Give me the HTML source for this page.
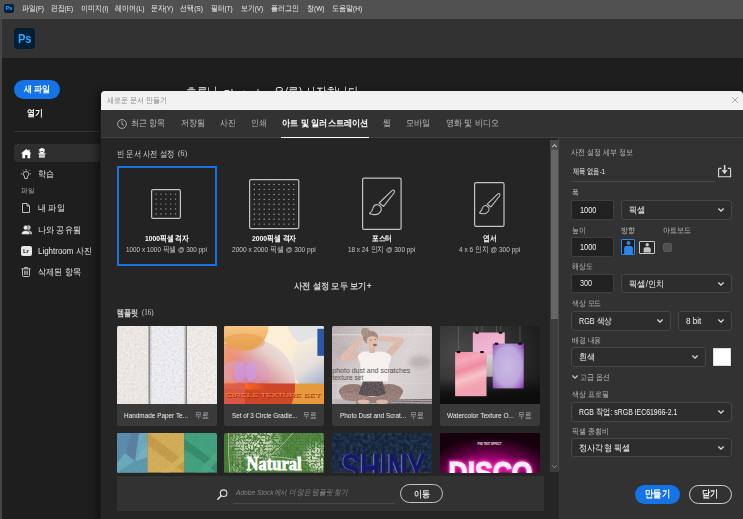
<!DOCTYPE html>
<html lang="ko"><head><meta charset="utf-8"><title>Photoshop</title>
<style>
html,body{margin:0;padding:0}
body{width:743px;height:519px;overflow:hidden;background:#1e1e1e;position:relative;font-family:"Liberation Sans",sans-serif;color:#fff;font-size:9px}
.a{position:absolute}
.t{position:absolute;white-space:nowrap;line-height:12px;height:12px;margin-top:-6px;transform-origin:0 50%}
.b{font-weight:bold}
svg{position:absolute;overflow:visible}
/* menu */
#menubar{left:0;top:0;width:743px;height:19px;background:#515151}
#menubar .t{font-size:7.5px;color:#f0f0f0;top:8.800px}
#header{left:0;top:19px;width:743px;height:39px;background:#323232}
#lstrip{left:0;top:19px;width:1.500px;height:500px;background:#464646}
.side .t{font-size:9px;color:#e8e8e8;left:38.200px}
/* dialog */
#dlg{left:101px;top:91px;width:642px;height:428px;background:#252525;border-radius:4px 4px 0 0;overflow:hidden;box-shadow:-3px 2px 8px rgba(0,0,0,.55)}
#dlg .in{position:absolute;left:-101px;top:-91px;width:743px;height:519px}
#titlebar{left:101px;top:91px;width:642px;height:18.500px;background:#f2f2f2}
#tabbar{left:101px;top:109.5px;width:642px;height:28px;background:#323232;border-bottom:1px solid #424242;box-sizing:border-box}
#tabbar .t{font-size:9px;color:#bebebe;top:13.500px}
#rpanel{left:559px;top:138px;width:184px;height:381px;background:#323232}
.lbl{font-size:8px;color:#b8b8b8;margin-top:-5.500px}
.inp{position:absolute;box-sizing:border-box;background:#212121;border:1px solid #3f3f3f;border-radius:2px;height:19px}
.dd{position:absolute;box-sizing:border-box;background:#2d2d2d;border:1px solid #474747;border-radius:3px;height:19px}
.val{font-size:8.500px;color:#f2f2f2}
.card .nm{font-size:8px;font-weight:bold;color:#fff}
.card .ds{font-size:7.5px;color:#c8c8c8}
.tc{position:absolute;width:100px;background:#3a3a3a;border-radius:2px;overflow:hidden}
.tc svg{overflow:hidden}
.cap{font-size:8px;color:#f0f0f0}
.free{font-size:7.500px;color:#b4b4b4}
</style></head>
<body>
<!-- app chrome -->
<div class="a" id="menubar">
  <div class="a" style="left:4px;top:3.5px;width:10px;height:9px;border-radius:2px;background:#001e36"></div>
  <span class="t b" style="left:5.5px;top:8px;font-size:6px;color:#31a8ff;letter-spacing:-0.3px">Ps</span>
  <span class="t" style="left: 22px; transform: scaleX(0.86);">파일(F)</span>
  <span class="t" style="left: 51px; transform: scaleX(0.846);">편집(E)</span>
  <span class="t" style="left: 80.5px; transform: scaleX(0.884);">이미지(I)</span>
  <span class="t" style="left: 114.5px; transform: scaleX(0.889);">레이어(L)</span>
  <span class="t" style="left: 151px; transform: scaleX(0.846);">문자(Y)</span>
  <span class="t" style="left: 180px; transform: scaleX(0.885);">선택(S)</span>
  <span class="t" style="left: 211px; transform: scaleX(0.85);">필터(T)</span>
  <span class="t" style="left: 240.5px; transform: scaleX(0.856);">보기(V)</span>
  <span class="t" style="left: 271px; transform: scaleX(0.859);">플러그인</span>
  <span class="t" style="left: 306.5px; transform: scaleX(0.872);">창(W)</span>
  <span class="t" style="left: 331.5px; transform: scaleX(0.879);">도움말(H)</span>
</div>
<div class="a" id="header">
  <div class="a" style="left:14px;top:9.3px;width:21px;height:20.3px;border-radius:4px;background:#001e36"></div>
  <span class="t b" style="left: 17.9px; top: 20px; font-size: 13.5px; line-height: 16px; height: 16px; margin-top: -8px; color: rgb(49, 168, 255); transform: scaleX(0.817);">Ps</span>
</div>
<div class="a" id="lstrip"></div>

<!-- sidebar -->
<div class="a" style="left:14px;top:79.5px;width:46px;height:19px;border-radius:10px;background:#1473e6"></div>
<span class="t b" style="left: 23.5px; top: 89px; font-size: 9.2px; color: rgb(255, 255, 255); transform: scaleX(0.893);">새 파일</span>
<span class="t b" style="left: 27px; top: 113px; font-size: 9.2px; color: rgb(255, 255, 255); transform: scaleX(0.878);">열기</span>
<div class="a" style="left:14px;top:131px;width:90px;height:1px;background:#343434"></div>
<div class="a" style="left:14px;top:143.5px;width:90px;height:18.5px;border-radius:3px;background:#2f2f2f"></div>
<div class="side">
  <span class="t b" style="top: 153.2px; font-size: 10px; color: rgb(255, 255, 255); transform: scaleX(0.79);">홈</span>
  <span class="t" style="top: 174px; transform: scaleX(0.875);">학습</span>
  <span class="t" style="top: 191px; left: 21px; font-size: 7px; color: rgb(176, 176, 176); transform: scaleX(0.946);">파일</span>
  <span class="t" style="top: 208px; transform: scaleX(0.906);">내 파일</span>
  <span class="t" style="top: 229.5px; transform: scaleX(0.9);">나와 공유됨</span>
  <span class="t" style="top: 251px; transform: scaleX(0.884);">Lightroom 사진</span>
  <span class="t" style="top: 272px; transform: scaleX(0.905);">삭제된 항목</span>
</div>
<!-- sidebar icons -->
<svg style="left:20.800px;top:148.700px" width="10.600" height="9.200" viewBox="0 0 12 10" preserveAspectRatio="none"><path d="M6 0 L0 5 H1.600 V10 H4.700 V6.400 H7.300 V10 H10.400 V5 H12 L9.800 3.150 V0.800 H8.300 V1.900 Z" fill="#fff"></path></svg>
<svg style="left:21.400px;top:168.900px" width="10" height="10" viewBox="0 0 10 10" fill="none" stroke="#d0d0d0" stroke-width="0.900"><path d="M5 2.500A2.600 2.600 0 0 0 3.300 7.100L3.800 9.500H6.200L6.700 7.100A2.600 2.600 0 0 0 5 2.500Z"></path><path d="M5 0V1.200M1.700 1.300L2.500 2.100M8.300 1.300L7.500 2.100M0 4.900H1.300M8.700 4.900H10"></path></svg>
<svg style="left:22px;top:203px" width="8" height="10" viewBox="0 0 8 10" fill="none" stroke="#d0d0d0" stroke-width="0.9"><path d="M0.5 0.5H5L7.5 3V9.5H0.5Z"></path><path d="M5 0.5V3H7.5"></path></svg>
<svg style="left:20.5px;top:224.5px" width="12" height="10" viewBox="0 0 12 10"><circle cx="7.4" cy="2.6" r="2.3" fill="#bdbdbd"></circle><path d="M3.6 9.2c0-2.6 1.6-3.8 3.8-3.8s3.8 1.2 3.8 3.8z" fill="#bdbdbd"></path><circle cx="4.700" cy="2.700" r="2.400" fill="#f0f0f0" stroke="#1e1e1e" stroke-width="0.600"></circle><path d="M0.400 9.400c0-2.700 1.700-3.800 4.300-3.800s4.300 1.100 4.300 3.800z" fill="#f0f0f0" stroke="#1e1e1e" stroke-width="0.600"></path></svg>
<div class="a" style="left:21px;top:246px;width:10.500px;height:10px;border-radius:2px;background:#e8e8e8"></div>
<span class="t b" style="left:23px;top:251.300px;font-size:6px;color:#222;letter-spacing:-0.2px">Lr</span>
<svg style="left:21px;top:267px" width="10" height="10" viewBox="0 0 10 10" fill="none" stroke="#d0d0d0" stroke-width="0.9"><path d="M0.4 1.8h9.200M3.4 1.6V0.500h3.200V1.600M1.500 2v6.600a.9.900 0 0 0 .9.900h5.200a.9.900 0 0 0 .9-.9V2"></path><path d="M3.600 3.600v4.200M5 3.600v4.200M6.400 3.600v4.200" stroke-width="0.800"></path></svg>

<!-- headline behind dialog -->
<span class="t" style="left: 185.5px; top: 93px; font-size: 15px; line-height: 18px; height: 18px; margin-top: -9px; color: rgb(255, 255, 255); transform: scaleX(0.706);">흐름님, <span style="position:relative;top:1.700px">Photoshop</span>을(를) 시작합니다</span>

<!-- dialog -->
<div class="a" style="left:100px;top:108px;width:1px;height:411px;background:#2d2d2d"></div>
<div class="a" id="dlg"><div class="in">
<div class="a" id="titlebar"></div>
<span class="t" style="left: 107px; top: 100.6px; font-size: 8px; color: rgb(138, 138, 138); transform: scaleX(0.884);">새로운 문서 만들기</span>
<svg style="left:731.500px;top:97px" width="6" height="6" viewBox="0 0 6 6" stroke="#9a9a9a" stroke-width="0.800"><path d="M0 0L6 6M6 0L0 6"></path></svg>
<div class="a" id="tabbar">
  <svg style="left:16px;top:9px" width="10" height="10" viewBox="0 0 10 10" fill="none" stroke="#b4b4b4" stroke-width="0.900"><circle cx="5" cy="5" r="4.400"></circle><path d="M5 2.200V5.200L7 6.400"></path></svg>
  <span class="t" style="left: 29.7px; transform: scaleX(0.889);">최근 항목</span>
  <span class="t" style="left: 79.5px; transform: scaleX(0.889);">저장됨</span>
  <span class="t" style="left: 118.5px; transform: scaleX(0.861);">사진</span>
  <span class="t" style="left: 149.7px; transform: scaleX(0.861);">인쇄</span>
  <span class="t b" style="left: 180.6px; color: rgb(255, 255, 255); transform: scaleX(0.911);">아트 및 일러스트레이션</span>
  <span class="t" style="left: 282.4px; transform: scaleX(0.844);">웹</span>
  <span class="t" style="left: 305px; transform: scaleX(0.907);">모바일</span>
  <span class="t" style="left: 344.5px; transform: scaleX(0.895);">영화 및 비디오</span>
  <div class="a" style="left:180px;top:27px;width:87.500px;height:1px;background:#fff"></div>
</div>

<!-- presets -->
<span class="t" style="left: 117px; top: 153.8px; font-size: 8.5px; color: rgb(214, 214, 214); transform: scaleX(0.817);">빈 문서 사전 설정</span><span class="t" style="left: 178.3px; top: 154px; font-size: 7.5px; font-family: &quot;Liberation Serif&quot;, serif; color: rgb(208, 208, 208); transform: scaleX(1.029);">(6)</span>
<div class="a" style="left:116.500px;top:166.200px;width:100px;height:100px;box-sizing:border-box;border:2px solid #1872dc;background:#232323"></div>
<div class="card">
  <!-- 1000 grid -->
  <svg style="left:151.300px;top:189px" width="30" height="30" viewBox="0 0 30 30"><rect x="0.600" y="0.600" width="28.800" height="28.800" rx="1.500" fill="none" stroke="#c4c4c4" stroke-width="1.200"></rect><g fill="#bdbdbd"><circle cx="5.10" cy="5.10" r="0.62"></circle><circle cx="5.10" cy="10.05" r="0.62"></circle><circle cx="5.10" cy="15.00" r="0.62"></circle><circle cx="5.10" cy="19.95" r="0.62"></circle><circle cx="5.10" cy="24.90" r="0.62"></circle><circle cx="9.97" cy="5.10" r="0.62"></circle><circle cx="9.97" cy="10.05" r="0.62"></circle><circle cx="9.97" cy="15.00" r="0.62"></circle><circle cx="9.97" cy="19.95" r="0.62"></circle><circle cx="9.97" cy="24.90" r="0.62"></circle><circle cx="14.85" cy="5.10" r="0.62"></circle><circle cx="14.85" cy="10.05" r="0.62"></circle><circle cx="14.85" cy="15.00" r="0.62"></circle><circle cx="14.85" cy="19.95" r="0.62"></circle><circle cx="14.85" cy="24.90" r="0.62"></circle><circle cx="19.73" cy="5.10" r="0.62"></circle><circle cx="19.73" cy="10.05" r="0.62"></circle><circle cx="19.73" cy="15.00" r="0.62"></circle><circle cx="19.73" cy="19.95" r="0.62"></circle><circle cx="19.73" cy="24.90" r="0.62"></circle><circle cx="24.60" cy="5.10" r="0.62"></circle><circle cx="24.60" cy="10.05" r="0.62"></circle><circle cx="24.60" cy="15.00" r="0.62"></circle><circle cx="24.60" cy="19.95" r="0.62"></circle><circle cx="24.60" cy="24.90" r="0.62"></circle></g></svg>
  <span class="t nm" style="left: 144.5px; top: 239.4px; transform: scaleX(0.846);">1000픽셀 격자</span>
  <span class="t ds" style="left: 126px; top: 250.3px; transform: scaleX(0.846);">1000 x 1000 픽셀 @ 300 ppi</span>
  <!-- 2000 grid -->
  <svg style="left:248.800px;top:178.800px" width="50.400" height="50.200" viewBox="0 0 50.400 50.200"><rect x="0.600" y="0.600" width="49.200" height="49" rx="1.500" fill="none" stroke="#c4c4c4" stroke-width="1.200"></rect><g fill="#c8c8c8"><circle cx="5.30" cy="5.40" r="0.62"></circle><circle cx="5.30" cy="10.36" r="0.62"></circle><circle cx="5.30" cy="15.33" r="0.62"></circle><circle cx="5.30" cy="20.29" r="0.62"></circle><circle cx="5.30" cy="25.25" r="0.62"></circle><circle cx="5.30" cy="30.21" r="0.62"></circle><circle cx="5.30" cy="35.18" r="0.62"></circle><circle cx="5.30" cy="40.14" r="0.62"></circle><circle cx="5.30" cy="45.10" r="0.62"></circle><circle cx="10.24" cy="5.40" r="0.62"></circle><circle cx="10.24" cy="10.36" r="0.62"></circle><circle cx="10.24" cy="15.33" r="0.62"></circle><circle cx="10.24" cy="20.29" r="0.62"></circle><circle cx="10.24" cy="25.25" r="0.62"></circle><circle cx="10.24" cy="30.21" r="0.62"></circle><circle cx="10.24" cy="35.18" r="0.62"></circle><circle cx="10.24" cy="40.14" r="0.62"></circle><circle cx="10.24" cy="45.10" r="0.62"></circle><circle cx="15.18" cy="5.40" r="0.62"></circle><circle cx="15.18" cy="10.36" r="0.62"></circle><circle cx="15.18" cy="15.33" r="0.62"></circle><circle cx="15.18" cy="20.29" r="0.62"></circle><circle cx="15.18" cy="25.25" r="0.62"></circle><circle cx="15.18" cy="30.21" r="0.62"></circle><circle cx="15.18" cy="35.18" r="0.62"></circle><circle cx="15.18" cy="40.14" r="0.62"></circle><circle cx="15.18" cy="45.10" r="0.62"></circle><circle cx="20.11" cy="5.40" r="0.62"></circle><circle cx="20.11" cy="10.36" r="0.62"></circle><circle cx="20.11" cy="15.33" r="0.62"></circle><circle cx="20.11" cy="20.29" r="0.62"></circle><circle cx="20.11" cy="25.25" r="0.62"></circle><circle cx="20.11" cy="30.21" r="0.62"></circle><circle cx="20.11" cy="35.18" r="0.62"></circle><circle cx="20.11" cy="40.14" r="0.62"></circle><circle cx="20.11" cy="45.10" r="0.62"></circle><circle cx="25.05" cy="5.40" r="0.62"></circle><circle cx="25.05" cy="10.36" r="0.62"></circle><circle cx="25.05" cy="15.33" r="0.62"></circle><circle cx="25.05" cy="20.29" r="0.62"></circle><circle cx="25.05" cy="25.25" r="0.62"></circle><circle cx="25.05" cy="30.21" r="0.62"></circle><circle cx="25.05" cy="35.18" r="0.62"></circle><circle cx="25.05" cy="40.14" r="0.62"></circle><circle cx="25.05" cy="45.10" r="0.62"></circle><circle cx="29.99" cy="5.40" r="0.62"></circle><circle cx="29.99" cy="10.36" r="0.62"></circle><circle cx="29.99" cy="15.33" r="0.62"></circle><circle cx="29.99" cy="20.29" r="0.62"></circle><circle cx="29.99" cy="25.25" r="0.62"></circle><circle cx="29.99" cy="30.21" r="0.62"></circle><circle cx="29.99" cy="35.18" r="0.62"></circle><circle cx="29.99" cy="40.14" r="0.62"></circle><circle cx="29.99" cy="45.10" r="0.62"></circle><circle cx="34.92" cy="5.40" r="0.62"></circle><circle cx="34.92" cy="10.36" r="0.62"></circle><circle cx="34.92" cy="15.33" r="0.62"></circle><circle cx="34.92" cy="20.29" r="0.62"></circle><circle cx="34.92" cy="25.25" r="0.62"></circle><circle cx="34.92" cy="30.21" r="0.62"></circle><circle cx="34.92" cy="35.18" r="0.62"></circle><circle cx="34.92" cy="40.14" r="0.62"></circle><circle cx="34.92" cy="45.10" r="0.62"></circle><circle cx="39.86" cy="5.40" r="0.62"></circle><circle cx="39.86" cy="10.36" r="0.62"></circle><circle cx="39.86" cy="15.33" r="0.62"></circle><circle cx="39.86" cy="20.29" r="0.62"></circle><circle cx="39.86" cy="25.25" r="0.62"></circle><circle cx="39.86" cy="30.21" r="0.62"></circle><circle cx="39.86" cy="35.18" r="0.62"></circle><circle cx="39.86" cy="40.14" r="0.62"></circle><circle cx="39.86" cy="45.10" r="0.62"></circle><circle cx="44.80" cy="5.40" r="0.62"></circle><circle cx="44.80" cy="10.36" r="0.62"></circle><circle cx="44.80" cy="15.33" r="0.62"></circle><circle cx="44.80" cy="20.29" r="0.62"></circle><circle cx="44.80" cy="25.25" r="0.62"></circle><circle cx="44.80" cy="30.21" r="0.62"></circle><circle cx="44.80" cy="35.18" r="0.62"></circle><circle cx="44.80" cy="40.14" r="0.62"></circle><circle cx="44.80" cy="45.10" r="0.62"></circle></g></svg>
  <span class="t nm" style="left: 251.7px; top: 239.4px; transform: scaleX(0.851);">2000픽셀 격자</span>
  <span class="t ds" style="left: 232.2px; top: 250.3px; transform: scaleX(0.875);">2000 x 2000 픽셀 @ 300 ppi</span>
  <!-- poster -->
  <svg style="left:361.800px;top:177.400px" width="39.700" height="53" viewBox="0 0 39.700 53"><rect x="0.600" y="1.100" width="38.500" height="51.300" rx="1.500" fill="none" stroke="#c4c4c4" stroke-width="1.200"></rect>
    <g fill="none" stroke="#c4c4c4" stroke-width="1.100" stroke-linejoin="round"><path d="M17.100 26 L29.700 13.800 Q31.500 12.300 32.300 13.600 Q32.800 14.800 32 16 L21.600 29.300 Z"></path><path d="M7.500 36.500 Q10.500 34 11.200 30.500 Q12.500 27 16 27.800 Q20 29.500 19.200 33 Q17.500 38 12 37.600 Q9 37.400 7.500 36.500 Z"></path></g></svg>
  <span class="t nm" style="left: 372px; top: 239.4px; transform: scaleX(0.833);">포스터</span>
  <span class="t ds" style="left: 348px; top: 250.3px; transform: scaleX(0.85);">18 x 24 인치 @ 300 ppi</span>
  <!-- postcard -->
  <svg style="left:474.100px;top:181.800px" width="30.600" height="45" viewBox="0 0 30.600 45"><rect x="0.600" y="0.600" width="29.400" height="43.800" rx="1.500" fill="none" stroke="#c4c4c4" stroke-width="1.200"></rect>
    <g fill="none" stroke="#c4c4c4" stroke-width="1.250" stroke-linejoin="round" transform="translate(-0.750 0.900) scale(0.820)"><path d="M17.100 26 L29.700 13.800 Q31.500 12.300 32.300 13.600 Q32.800 14.800 32 16 L21.600 29.300 Z"></path><path d="M7.500 36.500 Q10.500 34 11.200 30.500 Q12.500 27 16 27.800 Q20 29.500 19.200 33 Q17.500 38 12 37.600 Q9 37.400 7.500 36.500 Z"></path></g></svg>
  <span class="t nm" style="left: 482.7px; top: 239.4px; transform: scaleX(0.844);">엽서</span>
  <span class="t ds" style="left: 458.7px; top: 250.3px; transform: scaleX(0.867);">4 x 6 인치 @ 300 ppi</span>
</div>
<span class="t b" style="left: 293.5px; top: 286.3px; font-size: 9px; color: rgb(207, 207, 207); transform: scaleX(0.914);">사전 설정 모두 보기+</span>
<span class="t b" style="left: 117px; top: 312.5px; font-size: 8.5px; color: rgb(214, 214, 214); transform: scaleX(0.793);">템플릿</span><span class="t" style="left: 142.4px; top: 312.8px; font-size: 7.5px; font-family: &quot;Liberation Serif&quot;, serif; color: rgb(208, 208, 208); transform: scaleX(0.936);">(16)</span>

<!-- templates row 1 -->
<div class="tc" style="left:116.500px;top:325.500px;height:100.200px"><!--T1--><svg style="left:0;top:0" width="100" height="78.200" viewBox="0 0 100 78.200">
<defs>
<filter id="pn" x="0" y="0" width="100%" height="100%"><feTurbulence type="fractalNoise" baseFrequency="0.450" numOctaves="3" seed="3"></feTurbulence><feColorMatrix values="0 0 0 0 0.560  0 0 0 0 0.500  0 0 0 0 0.470  0.550 0.550 0 0 -0.420"></feColorMatrix></filter>
<linearGradient id="s1" x1="0" x2="1"><stop offset="0" stop-color="#000" stop-opacity="0.300"></stop><stop offset="1" stop-color="#000" stop-opacity="0"></stop></linearGradient>
<linearGradient id="s2" x1="0" x2="1"><stop offset="0" stop-color="#000" stop-opacity="0"></stop><stop offset="1" stop-color="#000" stop-opacity="0.300"></stop></linearGradient>
</defs>
<rect width="100" height="78.200" fill="#f1ece9"></rect>
<rect x="32" width="37.300" height="78.200" fill="#eff1f7"></rect>
<rect x="69.300" width="30.700" height="78.200" fill="#f3efec"></rect>
<rect width="100" height="78.200" filter="url(#pn)"></rect>
<rect x="32" width="3" height="78.200" fill="url(#s1)"></rect>
<rect x="66.300" width="3" height="78.200" fill="url(#s2)"></rect>
<rect x="31.600" width="0.900" height="78.200" fill="#6c6c6c"></rect>
<rect x="68.900" width="0.900" height="78.200" fill="#6c6c6c"></rect>
</svg></div>
<div class="tc" style="left:224px;top:325.500px;height:100.200px"><!--T2--><svg style="left:0;top:0" width="100" height="78.200" viewBox="0 0 100 78.200">
<defs>
<linearGradient id="c2a" x1="0" y1="0" x2="0" y2="1"><stop offset="0.450" stop-color="#f8c988"></stop><stop offset="1" stop-color="#eaa551"></stop></linearGradient>
<linearGradient id="c2b" gradientUnits="userSpaceOnUse" x1="62" y1="20" x2="22" y2="64"><stop offset="0" stop-color="#ebe5e3"></stop><stop offset="0.300" stop-color="#e8cfca"></stop><stop offset="0.620" stop-color="#dc9aa0"></stop><stop offset="0.850" stop-color="#d4636a"></stop><stop offset="1" stop-color="#cf4640"></stop></linearGradient>
<linearGradient id="c2c" x1="0.200" y1="0.100" x2="0.750" y2="0.900"><stop offset="0" stop-color="#f6ecdc"></stop><stop offset="0.450" stop-color="#e6e0dc"></stop><stop offset="1" stop-color="#8ea4c8"></stop></linearGradient>
<linearGradient id="c2bg" x1="0" y1="0" x2="1" y2="0"><stop offset="0" stop-color="#f9d9a4"></stop><stop offset="0.450" stop-color="#fdf0da"></stop><stop offset="1" stop-color="#fbe9cf"></stop></linearGradient>
<linearGradient id="c2l" x1="0" x2="1"><stop offset="0" stop-color="#f6a070" stop-opacity="0.900"></stop><stop offset="1" stop-color="#f6a070" stop-opacity="0"></stop></linearGradient>
<linearGradient id="c2o" x1="0" x2="1"><stop offset="0" stop-color="#ff6a1c" stop-opacity="0.950"></stop><stop offset="1" stop-color="#ff6a1c" stop-opacity="0"></stop></linearGradient>
</defs>
<rect width="100" height="78.200" fill="url(#c2bg)"></rect>
<circle cx="86" cy="-3" r="22" fill="#e4e3e3"></circle>
<circle cx="94" cy="38" r="27" fill="url(#c2c)"></circle>
<circle cx="26.600" cy="57.800" r="44.800" fill="url(#c2b)"></circle>
<rect x="0" y="18" width="30" height="45" fill="url(#c2l)"></rect>
<circle cx="20" cy="0" r="24.500" fill="url(#c2a)"></circle>
<ellipse cx="20" cy="16" rx="21" ry="8.500" fill="#e29a4a" opacity="0.450"></ellipse>
<rect x="93.400" y="2.800" width="6.600" height="27" fill="#2b56a3"></rect>
<g opacity="0.520"><circle cx="10.100" cy="45.900" r="11.300" fill="#dca2cc"></circle><circle cx="21.300" cy="45.900" r="11.300" fill="#d09ae0"></circle><circle cx="32.800" cy="45.900" r="11.300" fill="#dca2cc"></circle></g>
<ellipse cx="15.700" cy="45.900" rx="5.400" ry="9.800" fill="#c4a0ff" opacity="0.500"></ellipse><ellipse cx="27" cy="45.900" rx="5.400" ry="9.800" fill="#c4a0ff" opacity="0.500"></ellipse>
<rect x="21" y="57.500" width="50.400" height="20.700" fill="#cf4528"></rect>
<rect x="21" y="57.500" width="22" height="6" fill="url(#c2o)"></rect>
<rect x="0" y="57.500" width="21" height="20.700" fill="#de5a44" opacity="0.850"></rect>
<path d="M71.400 57.500H100V78.200H67.500Q71.400 68 71.400 57.500Z" fill="#e59b3c"></path>
<text x="2.300" y="71.800" font-family="Liberation Sans, sans-serif" font-weight="bold" font-size="6.100" textLength="95" lengthAdjust="spacingAndGlyphs" fill="#a8241a" opacity="0.900">CIRCLE TEXTURE SET</text>
<text x="1.800" y="71.400" font-family="Liberation Sans, sans-serif" font-weight="bold" font-size="6.100" textLength="95" lengthAdjust="spacingAndGlyphs" fill="#eea434" opacity="0.620">CIRCLE TEXTURE SET</text>
</svg></div>
<div class="tc" style="left:332px;top:325.500px;height:100.200px"><!--T3--><svg style="left:0;top:0" width="100" height="78.200" viewBox="0 0 100 78.200">
<defs>
<linearGradient id="c3bg" x1="0" y1="0.200" x2="1" y2="0.600"><stop offset="0" stop-color="#b8adaf"></stop><stop offset="0.300" stop-color="#cfc6c7"></stop><stop offset="0.700" stop-color="#d9d2d2"></stop><stop offset="1" stop-color="#cdc5c6"></stop></linearGradient>
<filter id="b3" x="-30%" y="-30%" width="160%" height="160%"><feGaussianBlur stdDeviation="2.500"></feGaussianBlur></filter>
<filter id="d3" x="0" y="0" width="100%" height="100%"><feTurbulence type="fractalNoise" baseFrequency="0.600" numOctaves="2" seed="9"></feTurbulence><feColorMatrix values="0 0 0 0 0.900  0 0 0 0 0.860  0 0 0 0 0.860  0.900 0.900 0 0 -0.620"></feColorMatrix></filter>
</defs>
<rect width="100" height="78.200" fill="url(#c3bg)"></rect>
<rect y="8" width="100" height="1.400" fill="#e2dcdc" opacity="0.700"></rect>
<rect y="57" width="100" height="1" fill="#e0dada" opacity="0.500"></rect>
<ellipse cx="88" cy="36" rx="11" ry="6" fill="#a9a0a3" opacity="0.700" filter="url(#b3)"></ellipse>
<ellipse cx="12" cy="26" rx="10" ry="7" fill="#aea4a7" opacity="0.500" filter="url(#b3)"></ellipse>
<!-- rug -->
<rect y="73" width="100" height="5.200" fill="#b9b0b1"></rect>
<path d="M60 74.200L100 73.400M56 76L100 75.200M50 77.800L100 77" stroke="#5a5256" stroke-width="0.900"></path>
<!-- legs -->
<ellipse cx="21" cy="65.500" rx="14" ry="7.500" fill="#8d726b"></ellipse>
<ellipse cx="57" cy="65.500" rx="14" ry="7.500" fill="#8d726b"></ellipse>
<path d="M31 55 L50.500 55 L54.500 70 L26 70Z" fill="#51474b"></path>
<path d="M9 67 Q8 74 16 74.500 L50 78.200 L56 78.200 L56 74 L24 68Z" fill="#9a7d74"></path>
<path d="M69 67 Q70 74 62 74.500 L30 78.200 L24 78.200 L24 75 L54 68Z" fill="#93766e"></path>
<ellipse cx="31.500" cy="75.800" rx="6" ry="2.400" fill="#dcb6a6"></ellipse><ellipse cx="50" cy="75.800" rx="6" ry="2.400" fill="#d9b2a2"></ellipse>
<!-- arms -->
<path d="M30 26 L9 30.300 Q6 32.800 9.500 35.200 L30 32Z" fill="#dcb5a4"></path>
<path d="M7.500 31 L28 10.500 L32 14 L12.500 35Z" fill="#dfb9a8"></path>
<path d="M54 26 L67.500 11.500 Q72 11.500 72.300 15.500 L60 30Z" fill="#dcb5a4"></path>
<!-- hair back -->
<ellipse cx="38.500" cy="11.500" rx="7.600" ry="6.800" fill="#9b8479"></ellipse>
<circle cx="33.300" cy="6.200" r="4.400" fill="#a08a7e"></circle>
<path d="M71.500 17.200 L47 14.800 L47.500 10 L71 11.400Z" fill="#dfb9a8"></path>
<!-- shirt -->
<path d="M25.500 31.500 Q26.500 25.500 34 25.500 L47 25.500 Q57.500 25.500 59.500 31.500 L57 38 L56 55.500 L28 55.500 L28.500 38Z" fill="#f5f1ef"></path>
<rect x="37.300" y="20" width="5.600" height="6.500" fill="#d9b1a0"></rect>
<path d="M36.500 25.500 Q40 29 44 25.500Z" fill="#d9b1a0"></path>
<!-- face -->
<ellipse cx="40.300" cy="15" rx="5.500" ry="6.800" fill="#e0bba9"></ellipse>
<path d="M34.500 13 Q35 7.500 41 7.600 Q45.500 8 46 12 Q42 9.500 38 10.500 Q35.500 11.500 34.500 13Z" fill="#9b8479"></path>
<ellipse cx="43" cy="19" rx="2" ry="1.300" fill="#a5474f"></ellipse>
<path d="M37.500 14.200h2M42 13.600h2" stroke="#6b4f48" stroke-width="0.600"></path>
<rect width="100" height="78.200" filter="url(#d3)" opacity="0.300"></rect>
<text x="0.300" y="47" font-family="Liberation Sans, sans-serif" font-size="6.600" textLength="78" lengthAdjust="spacingAndGlyphs" fill="#54504f">photo dust and scratches</text>
<text x="0.300" y="54" font-family="Liberation Sans, sans-serif" font-size="6.600" textLength="31" lengthAdjust="spacingAndGlyphs" fill="#54504f">texture set</text>
</svg></div>
<div class="tc" style="left:439.500px;top:325.500px;height:100.200px"><!--T4--><svg style="left:0;top:0" width="100" height="78.200" viewBox="0 0 100 78.200">
<defs>
<radialGradient id="c4bg" cx="0.200" cy="0.350" r="0.950"><stop offset="0" stop-color="#4a4a4a"></stop><stop offset="0.550" stop-color="#303030"></stop><stop offset="1" stop-color="#161616"></stop></radialGradient>
<linearGradient id="c4f" x1="0" y1="0" x2="0" y2="1"><stop offset="0" stop-color="#0a0a0a" stop-opacity="0"></stop><stop offset="0.600" stop-color="#0a0a0a" stop-opacity="0.800"></stop><stop offset="1" stop-color="#0e0c0c" stop-opacity="0.950"></stop></linearGradient>
<linearGradient id="c4a" x1="0" y1="0" x2="0.300" y2="1"><stop offset="0" stop-color="#eba4c8"></stop><stop offset="0.500" stop-color="#f1b8d2"></stop><stop offset="1" stop-color="#e695bc"></stop></linearGradient>
<linearGradient id="c4b" x1="0" y1="0" x2="0.250" y2="1"><stop offset="0" stop-color="#f08ea9"></stop><stop offset="0.250" stop-color="#f5a9b8"></stop><stop offset="0.450" stop-color="#ef8aa4"></stop><stop offset="0.650" stop-color="#f8c3c6"></stop><stop offset="0.850" stop-color="#f3a3b2"></stop><stop offset="1" stop-color="#f0a2b4"></stop></linearGradient>
<radialGradient id="c4c" cx="0.480" cy="0.500" r="0.720"><stop offset="0" stop-color="#cabae4"></stop><stop offset="0.600" stop-color="#bda6dc"></stop><stop offset="0.820" stop-color="#a06cc2"></stop><stop offset="1" stop-color="#7b259e"></stop></radialGradient>
<linearGradient id="c4w" x1="0" y1="0" x2="0" y2="1"><stop offset="0" stop-color="#d6d6d6"></stop><stop offset="1" stop-color="#a8a8a8"></stop></linearGradient>
</defs>
<rect width="100" height="78.200" fill="url(#c4bg)"></rect>
<rect y="52" width="100" height="26.200" fill="url(#c4f)"></rect>
<path d="M18.500 0V26M37 0V7M42 0V26M56.500 0V18M60.500 0V7M80 0V18" stroke="#7c7c7c" stroke-width="0.450"></path>
<rect x="32.800" y="6.500" width="32" height="44" fill="url(#c4a)"></rect>
<rect x="46.500" y="28.800" width="6.500" height="21.600" fill="url(#c4w)"></rect>
<rect x="15.100" y="26" width="31.400" height="44.200" fill="url(#c4b)"></rect>
<rect x="52.700" y="17.600" width="31.100" height="44.800" fill="url(#c4c)"></rect>
<g fill="#0a0a0a"><rect x="35.300" y="5.600" width="3.400" height="2.100"></rect><rect x="58.800" y="5.600" width="3.400" height="2.100"></rect><rect x="16.800" y="25" width="3.400" height="2.100"></rect><rect x="40.300" y="25" width="3.400" height="2.100"></rect><rect x="54.800" y="16.700" width="3.400" height="2.100"></rect><rect x="78.300" y="16.700" width="3.400" height="2.100"></rect></g>
</svg></div>
<span class="t cap" style="left: 124.2px; top: 415.6px; transform: scaleX(0.801);">Handmade Paper Te...</span><span class="t free" style="left: 194.7px; top: 415.6px; transform: scaleX(0.856);">무료</span>
<span class="t cap" style="left: 231.7px; top: 415.6px; transform: scaleX(0.788);">Set of 3 Circle Gradie...</span><span class="t free" style="left: 302.7px; top: 415.6px; transform: scaleX(0.831);">무료</span>
<span class="t cap" style="left: 339.5px; top: 415.6px; transform: scaleX(0.8);">Photo Dust and Scrat...</span><span class="t free" style="left: 410px; top: 415.6px; transform: scaleX(0.856);">무료</span>
<span class="t cap" style="left: 447px; top: 415.6px; transform: scaleX(0.819);">Watercolor Texture O...</span><span class="t free" style="left: 518.2px; top: 415.6px; transform: scaleX(0.831);">무료</span>
<!-- templates row 2 (clipped) -->
<div class="tc" style="left:116.500px;top:433px;height:39.500px;border-radius:2px 2px 0 0"><!--T5--><svg style="left:0;top:0" width="100" height="39.500" viewBox="0 0 100 39.500">
<defs>
<filter id="fn5" x="0" y="0" width="100%" height="100%"><feTurbulence type="fractalNoise" baseFrequency="0.800 1.600" numOctaves="1" seed="5"></feTurbulence><feColorMatrix values="0 0 0 0 0  0 0 0 0 0  0 0 0 0 0  0.120 0.120 0 0 -0.100"></feColorMatrix></filter>
</defs>
<rect width="30.500" height="39.500" fill="#6cabc0"></rect>
<path d="M0 0L14 0L8 20L0 30Z" fill="#5b8fae"></path><path d="M8 20L14 0L22 0L18 28Z" fill="#5a6f98" opacity="0.700"></path><path d="M0 39.500L18 28L30.500 24V39.500Z" fill="#5e9bb2"></path><path d="M18 28L30.500 10V24Z" fill="#7db3c4"></path>
<rect x="30.500" width="37" height="39.500" fill="#d5b05a"></rect>
<path d="M30.500 0L67.500 28V39.500L30.500 12Z" fill="#c39a48" opacity="0.800"></path><path d="M44 39.500L67.500 20V28L52 39.500Z" fill="#dbb763" opacity="0.800"></path>
<rect x="67.500" width="32.500" height="39.500" fill="#44a482"></rect>
<path d="M67.500 6L100 30V39.500L67.500 16Z" fill="#368a6a" opacity="0.800"></path><path d="M80 39.500L100 18V28L90 39.500Z" fill="#4dab86" opacity="0.800"></path>
<rect width="100" height="39.500" filter="url(#fn5)"></rect>
</svg></div>
<div class="tc" style="left:224px;top:433px;height:39.500px;border-radius:2px 2px 0 0"><!--T6--><svg style="left:0;top:0" width="100" height="39.500" viewBox="0 0 100 39.500">
<defs>
<filter id="fn6" x="0" y="0" width="100%" height="100%"><feTurbulence type="turbulence" baseFrequency="0.330" numOctaves="2" seed="4"></feTurbulence><feColorMatrix values="0 0 0 0 0.770  0 0 0 0 0.740  0 0 0 0 0.650  2.300 2.300 0 0 -0.620"></feColorMatrix></filter>
<radialGradient id="m6a" cx="32" cy="11" r="30" gradientUnits="userSpaceOnUse" gradientTransform="translate(32 11) scale(1 0.720) translate(-32 -11)"><stop offset="0" stop-color="#fff" stop-opacity="0.950"></stop><stop offset="0.600" stop-color="#fff" stop-opacity="0.750"></stop><stop offset="1" stop-color="#fff" stop-opacity="0.150"></stop></radialGradient>
<radialGradient id="m6b" cx="94" cy="25" r="17" gradientUnits="userSpaceOnUse"><stop offset="0" stop-color="#fff" stop-opacity="1"></stop><stop offset="0.600" stop-color="#fff" stop-opacity="0.800"></stop><stop offset="1" stop-color="#fff" stop-opacity="0"></stop></radialGradient>
<radialGradient id="m6c" cx="14" cy="34" r="12" gradientUnits="userSpaceOnUse"><stop offset="0" stop-color="#fff" stop-opacity="0.550"></stop><stop offset="1" stop-color="#fff" stop-opacity="0"></stop></radialGradient>
<mask id="k6"><rect width="100" height="39.500" fill="#000"></rect><rect x="5" width="95" height="39.500" fill="url(#m6a)"></rect><rect width="100" height="39.500" fill="url(#m6b)"></rect><rect x="5" width="95" height="39.500" fill="url(#m6c)"></rect></mask>
</defs>
<rect width="100" height="39.500" fill="#437c33"></rect>
<g mask="url(#k6)"><rect width="100" height="39.500" filter="url(#fn6)"></rect></g>
<g fill="none" stroke="#cfc8b0" stroke-width="0.750"><path d="M4.600 0Q3.800 20 5.800 39.500"></path><path d="M69 0Q56 15 44.500 24.500Q32 33 23 39.500"></path><path d="M47 23.600Q60 24 76 27.200L100 28"></path></g>
<text x="22.600" y="36.500" font-family="Liberation Serif, serif" font-weight="bold" font-size="18" textLength="55" lengthAdjust="spacingAndGlyphs" fill="#fff" stroke="#fff" stroke-width="0.800">Natural</text>
</svg></div>
<div class="tc" style="left:332px;top:433px;height:39.500px;border-radius:2px 2px 0 0"><!--T7--><svg style="left:0;top:0" width="100" height="39.500" viewBox="0 0 100 39.500">
<defs>
<filter id="fn7" x="0" y="0" width="100%" height="100%"><feTurbulence type="fractalNoise" baseFrequency="0.280" numOctaves="3" seed="7"></feTurbulence><feColorMatrix values="0 0 0 0 0.180  0 0 0 0 0.300  0 0 0 0 0.450  0.380 0.380 0 0 -0.300"></feColorMatrix></filter>
</defs>
<rect width="100" height="39.500" fill="#13223a"></rect>
<rect width="100" height="39.500" filter="url(#fn7)"></rect>
<text x="9" y="49" font-family="Liberation Sans, sans-serif" font-weight="bold" font-size="41" textLength="84" lengthAdjust="spacingAndGlyphs" fill="#8da2d4">SHINY</text>
<text x="9.600" y="49.300" font-family="Liberation Sans, sans-serif" font-weight="bold" font-size="41" textLength="84" lengthAdjust="spacingAndGlyphs" fill="#17156c">SHINY</text>
</svg></div>
<div class="tc" style="left:439.500px;top:433px;height:39.500px;border-radius:2px 2px 0 0"><!--T8--><svg style="left:0;top:0" width="100" height="39.500" viewBox="0 0 100 39.500">
<defs>
<radialGradient id="c8" cx="50" cy="48" r="40" gradientUnits="userSpaceOnUse" gradientTransform="translate(50 48) scale(1.750 1.100) translate(-50 -48)"><stop offset="0" stop-color="#f01cae"></stop><stop offset="0.400" stop-color="#bc0c88"></stop><stop offset="0.700" stop-color="#5c0040"></stop><stop offset="1" stop-color="#15000c"></stop></radialGradient>
<filter id="g8" x="-20%" y="-40%" width="140%" height="180%"><feGaussianBlur stdDeviation="1.800"></feGaussianBlur></filter>
</defs>
<rect width="100" height="39.500" fill="#15000c"></rect>
<rect width="100" height="39.500" fill="url(#c8)"></rect>
<text x="8.500" y="51.300" font-family="Liberation Sans, sans-serif" font-weight="bold" font-size="32" textLength="84" lengthAdjust="spacingAndGlyphs" fill="#ff2fc0" stroke="#ff2fc0" stroke-width="3.500" filter="url(#g8)">DISCO</text>
<text x="8.500" y="51.300" font-family="Liberation Sans, sans-serif" font-weight="bold" font-size="32" textLength="84" lengthAdjust="spacingAndGlyphs" fill="#ffeefb" stroke="#ffeefb" stroke-width="1.200">DISCO</text>
<text x="37.500" y="12.300" font-family="Liberation Sans, sans-serif" font-weight="bold" font-size="2.600" textLength="24" lengthAdjust="spacingAndGlyphs" fill="#f2e8f0">PSD TEXT EFFECT</text>
</svg></div>

<!-- search bar -->
<div class="a" style="left:116.500px;top:476.300px;width:427px;height:34.500px;background:#323232"></div>
<svg style="left:217px;top:488.500px" width="11" height="11" viewBox="0 0 11 11" fill="none" stroke="#e0e0e0"><circle cx="6.600" cy="4.200" r="3.300" stroke-width="1.100"></circle><path d="M4.200 6.700L0.800 10.200" stroke-width="1.500" stroke-linecap="round"></path></svg>
<span class="t" style="left: 236px; top: 493.3px; font-size: 8px; font-style: italic; color: rgb(133, 133, 133); transform: scaleX(0.829);">Adobe Stock에서 더 많은 템플릿 찾기</span>
<div class="a" style="left:233px;top:502.700px;width:161.500px;height:1px;background:#474747"></div>
<div class="a" style="left:400.200px;top:484.200px;width:43px;height:19px;box-sizing:border-box;border:1.400px solid #c4c4c4;border-radius:10px"></div>
<span class="t b" style="left: 414px; top: 493.6px; font-size: 9px; color: rgb(224, 224, 224); transform: scaleX(0.889);">이동</span>

<!-- middle scrollbar -->
<div class="a" style="left:550px;top:140.400px;width:9px;height:332px;background:#3d3d3d"></div>
<div class="a" style="left:550px;top:140.400px;width:9px;height:10px;background:#4a4a4a"></div>
<div class="a" style="left:550.500px;top:150.400px;width:7.800px;height:168.400px;background:#666"></div>
<svg style="left:552px;top:143.800px" width="5" height="3.500" viewBox="0 0 5 3.500" fill="none" stroke="#b8b8b8" stroke-width="1.100"><path d="M0.300 3.200L2.500 0.800L4.700 3.200"></path></svg>
<svg style="left:552px;top:464.500px" width="5" height="3.500" viewBox="0 0 5 3.500" fill="none" stroke="#8c8c8c" stroke-width="1"><path d="M0.300 0.400L2.500 2.800L4.700 0.400"></path></svg>

<!--MAIN-->

<div class="a" id="rpanel"></div>
<span class="t lbl" style="left: 571.3px; top: 152.3px; transform: scaleX(0.87);">사전 설정 세부 정보</span>
<span class="t" style="left: 572.7px; top: 171.8px; font-size: 8px; color: rgb(244, 244, 244); transform: scaleX(0.781);">제목 없음-1</span>
<div class="a" style="left:571.500px;top:181px;width:143px;height:1px;background:#494949"></div>
<svg style="left:718.100px;top:165px" width="13.200" height="12.400" viewBox="0 0 13.200 12.400" fill="none" stroke="#dcdcdc" stroke-width="1.100"><path d="M0.600 3.400V11.800H12.600V3.400"></path><path d="M0.600 3.400H3.400M9.800 3.400H12.600"></path><path d="M6.600 0V6.500" stroke-width="1.500"></path><path d="M3.500 5.200L6.600 9L9.700 5.200Z" fill="#dcdcdc" stroke="none"></path></svg>

<span class="t lbl" style="left: 571.5px; top: 192.5px; transform: scaleX(0.85);">폭</span>
<div class="inp" style="left:571px;top:200px;width:43px;height:20px"></div>
<span class="t val" style="left: 580px; top: 210.2px; transform: scaleX(0.872);">1000</span>
<div class="dd" style="left:621px;top:200px;width:111px;height:20px"></div>
<span class="t val" style="left: 629px; top: 210.2px; transform: scaleX(0.917);">픽셀</span>
<svg style="left:717.7px;top:208.3px" width="6" height="4" viewBox="0 0 6 4" fill="none" stroke="#e0e0e0" stroke-width="1.200"><path d="M0.400 0.500L3 3.200L5.600 0.500"></path></svg>
<span class="t lbl" style="left: 571.5px; top: 230px; transform: scaleX(0.844);">높이</span>
<span class="t lbl" style="left: 621.2px; top: 230px; transform: scaleX(0.863);">방향</span>
<span class="t lbl" style="left: 662.7px; top: 230px; transform: scaleX(0.875);">아트보드</span>
<div class="inp" style="left:571px;top:237px;width:43px;height:20px"></div>
<span class="t val" style="left: 580px; top: 246.8px; transform: scaleX(0.872);">1000</span>
<!-- orientation -->
<div class="a" style="left:620.700px;top:238.700px;width:14.500px;height:16.300px;box-sizing:border-box;border:1px solid #2b86ee;background:#1d1d1d;border-radius:1px"></div>
<svg style="left:623.500px;top:241.300px" width="9" height="13.200" viewBox="0 0 9 13.200" fill="#2b86ee"><circle cx="4.500" cy="2" r="2"></circle><path d="M0.100 13.200V7.200Q0.100 4.900 2.400 4.900H6.600Q8.900 4.900 8.900 7.200V13.200Z"></path></svg>
<div class="a" style="left:639px;top:240.500px;width:16.300px;height:13.300px;box-sizing:border-box;border:1px solid #c8c8c8;background:#262626;border-radius:1px"></div>
<svg style="left:643px;top:243.300px" width="8.400" height="9.500" viewBox="0 0 8.400 9.500" fill="#c4c4c4"><circle cx="4.200" cy="1.800" r="1.700"></circle><path d="M0.600 9.500V6Q0.600 4.200 2.600 4.200H5.800Q7.800 4.200 7.800 6V9.500Z"></path></svg>
<div class="a" style="left:663.300px;top:242.500px;width:9.200px;height:9.200px;border-radius:2px;background:#4f4f4f;box-sizing:border-box;border:1px solid #5a5a5a"></div>

<span class="t lbl" style="left: 571.5px; top: 266px; transform: scaleX(0.854);">해상도</span>
<div class="inp" style="left:571px;top:274px;width:43px;height:19px"></div>
<span class="t val" style="left: 580px; top: 283.2px; transform: scaleX(0.846);">300</span>
<div class="dd" style="left:621px;top:274px;width:111px;height:19px"></div>
<span class="t val" style="left: 629px; top: 283.8px; transform: scaleX(0.925);">픽셀/인치</span>
<svg style="left:717.7px;top:281.9px" width="6" height="4" viewBox="0 0 6 4" fill="none" stroke="#e0e0e0" stroke-width="1.200"><path d="M0.400 0.500L3 3.200L5.600 0.500"></path></svg>
<span class="t lbl" style="left: 571.5px; top: 303px; transform: scaleX(0.856);">색상 모드</span>
<div class="dd" style="left:571px;top:311px;width:100px;height:20px"></div>
<span class="t val" style="left: 578.7px; top: 320.8px; transform: scaleX(0.846);">RGB 색상</span>
<svg style="left:657px;top:318.9px" width="6" height="4" viewBox="0 0 6 4" fill="none" stroke="#e0e0e0" stroke-width="1.200"><path d="M0.400 0.500L3 3.200L5.600 0.500"></path></svg>
<div class="dd" style="left:678px;top:311px;width:54px;height:20px"></div>
<span class="t val" style="left: 685.7px; top: 320.8px; transform: scaleX(0.952);">8 bit</span>
<svg style="left:717.7px;top:318.9px" width="6" height="4" viewBox="0 0 6 4" fill="none" stroke="#e0e0e0" stroke-width="1.200"><path d="M0.400 0.500L3 3.200L5.600 0.500"></path></svg>
<span class="t lbl" style="left: 571.5px; top: 340px; transform: scaleX(0.856);">배경 내용</span>
<div class="dd" style="left:571px;top:347px;width:135px;height:20px"></div>
<span class="t val" style="left: 579px; top: 357.2px; transform: scaleX(0.906);">흰색</span>
<svg style="left:691.5px;top:355.3px" width="6" height="4" viewBox="0 0 6 4" fill="none" stroke="#e0e0e0" stroke-width="1.200"><path d="M0.400 0.500L3 3.200L5.600 0.500"></path></svg>
<div class="a" style="left:713px;top:347.600px;width:18.300px;height:18.600px;box-sizing:border-box;background:#fff;border:1px solid #dcdcdc"></div>
<svg style="left:572px;top:375.4px" width="6" height="4" viewBox="0 0 6 4" fill="none" stroke="#c8c8c8" stroke-width="1.200"><path d="M0.400 0.500L3 3.200L5.600 0.500"></path></svg>
<span class="t lbl" style="left: 580px; top: 377.2px; transform: scaleX(0.862);">고급 옵션</span>
<span class="t lbl" style="left: 571.5px; top: 394.3px; transform: scaleX(0.871);">색상 프로필</span>
<div class="dd" style="left:571px;top:402px;width:161px;height:20px"></div>
<span class="t val" style="left: 578.7px; top: 412.2px; transform: scaleX(0.812);">RGB 작업: sRGB IEC61966-2.1</span>
<svg style="left:717.7px;top:410.2px" width="6" height="4" viewBox="0 0 6 4" fill="none" stroke="#e0e0e0" stroke-width="1.200"><path d="M0.400 0.500L3 3.200L5.600 0.500"></path></svg>
<span class="t lbl" style="left: 571.5px; top: 431.3px; transform: scaleX(0.871);">픽셀 종횡비</span>
<div class="dd" style="left:571px;top:438px;width:161px;height:19px"></div>
<span class="t val" style="left: 578.7px; top: 448px; transform: scaleX(0.914);">정사각형 픽셀</span>
<svg style="left:717.7px;top:446.2px" width="6" height="4" viewBox="0 0 6 4" fill="none" stroke="#e0e0e0" stroke-width="1.200"><path d="M0.400 0.500L3 3.200L5.600 0.500"></path></svg>
<!-- right-panel scrollbar sliver -->
<div class="a" style="left:557.500px;top:138px;width:1.500px;height:333px;background:#4a4a4a"></div>
<!-- buttons -->
<div class="a" style="left:635px;top:484.700px;width:44.500px;height:19px;border-radius:10px;background:#1473e6"></div>
<span class="t b" style="left: 644.5px; top: 494.2px; font-size: 9.5px; color: rgb(255, 255, 255); transform: scaleX(0.833);">만들기</span>
<div class="a" style="left:688.600px;top:484.700px;width:43.200px;height:19px;box-sizing:border-box;border:1.600px solid #cfcfcf;border-radius:10px"></div>
<span class="t b" style="left: 701.7px; top: 494.2px; font-size: 9.5px; color: rgb(240, 240, 240); transform: scaleX(0.815);">닫기</span>

<!--RIGHT-->
</div></div>

</body></html>
